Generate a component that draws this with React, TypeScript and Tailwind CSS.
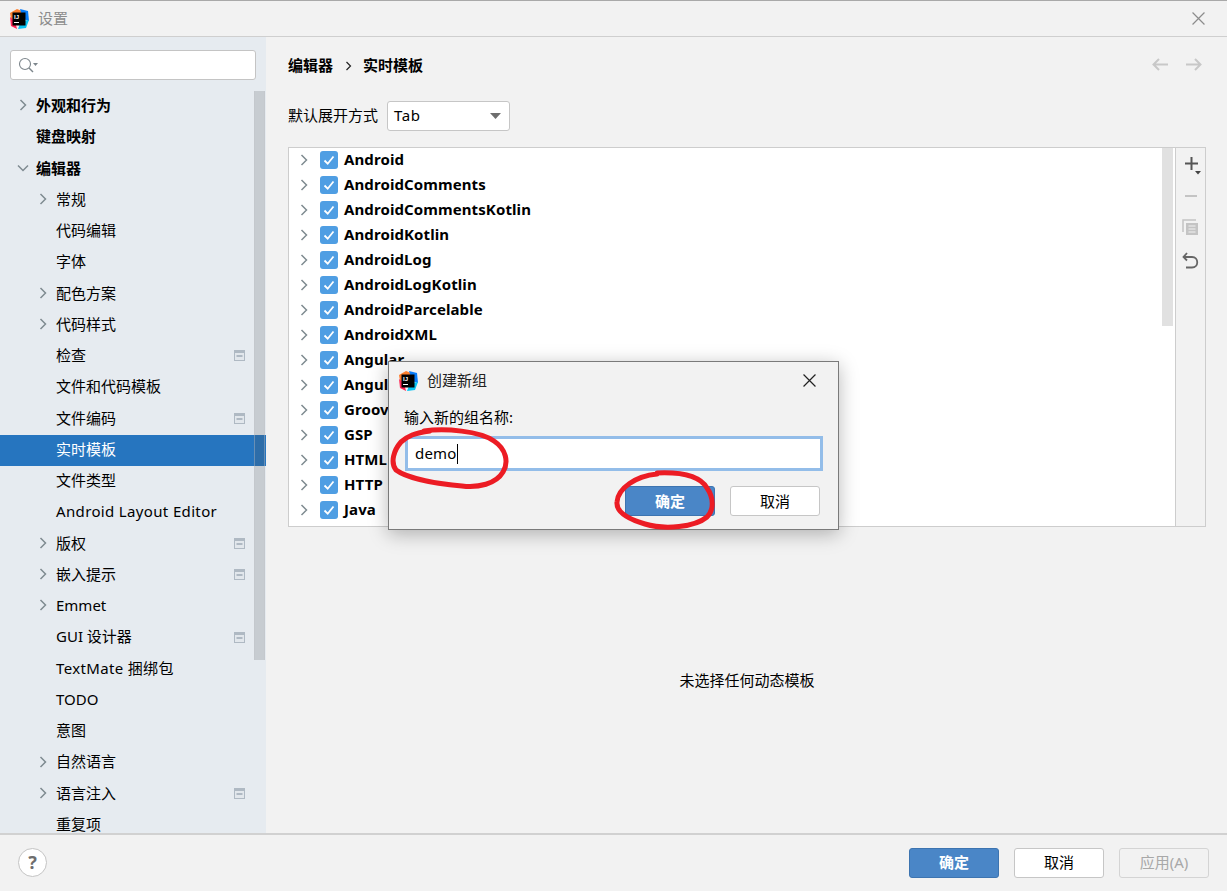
const font = "font-['Segoe_UI','Noto_Sans','Noto_Sans_CJK_SC',sans-serif]"

const sideItems = [
  { name: "外观和行为", bold: true, arrow: "right" },
  { name: "键盘映射", bold: true },
  { name: "编辑器", bold: true, arrow: "down" },
  { name: "常规", sub: true, arrow: "right" },
  { name: "代码编辑", sub: true },
  { name: "字体", sub: true },
  { name: "配色方案", sub: true, arrow: "right" },
  { name: "代码样式", sub: true, arrow: "right" },
  { name: "检查", sub: true, badge: true },
  { name: "文件和代码模板", sub: true },
  { name: "文件编码", sub: true, badge: true },
  { name: "实时模板", sub: true, selected: true },
  { name: "文件类型", sub: true },
  { name: "Android Layout Editor", sub: true, wide: true },
  { name: "版权", sub: true, arrow: "right", badge: true },
  { name: "嵌入提示", sub: true, arrow: "right", badge: true },
  { name: "Emmet", sub: true, arrow: "right" },
  { name: "GUI 设计器", sub: true, badge: true },
  { name: "TextMate 捆绑包", sub: true, wide: true },
  { name: "TODO", sub: true },
  { name: "意图", sub: true },
  { name: "自然语言", sub: true, arrow: "right" },
  { name: "语言注入", sub: true, arrow: "right", badge: true },
  { name: "重复项", sub: true },
]

const groups = [
  "Android",
  "AndroidComments",
  "AndroidCommentsKotlin",
  "AndroidKotlin",
  "AndroidLog",
  "AndroidLogKotlin",
  "AndroidParcelable",
  "AndroidXML",
  "Angular",
  "Angular",
  "Groovy",
  "GSP",
  "HTML",
  "HTTP",
  "Java",
]

const Chevron = ({ down = false }: { down?: boolean }) => (
  <svg width="12" height="12" viewBox="0 0 12 12" fill="none" stroke="#7f8b91" strokeWidth="1.5">
    {down ? <path d="M1 3.5 L6 8.5 L11 3.5" /> : <path d="M3.5 1 L8.5 6 L3.5 11" />}
  </svg>
)

const Logo = () => (
  <svg width="20" height="20" viewBox="0 0 20 20">
    <path d="M1 4 L8 0 L13 2 L8 10 L2 10 Z" fill="#fe7f2d" />
    <path d="M11 0 L19 2 L20 12 L14 10 Z" fill="#087cfa" />
    <path d="M1 8 L6 12 L8 20 L2 17 Z" fill="#fe2857" />
    <path d="M12 12 L20 11 L17 19 L9 20 Z" fill="#07c3f2" />
    <rect x="3.5" y="3.5" width="13" height="13" fill="#000" />
    <text x="5" y="10" fontSize="6" fontWeight="700" fill="#fff" fontFamily="Liberation Sans">IJ</text>
    <rect x="5" y="13" width="5" height="1" fill="#fff" />
  </svg>
)

const Close = ({ color, size = 12 }: { color: string; size?: number }) => (
  <svg width={size} height={size} viewBox="0 0 12 12" stroke={color} strokeWidth="1.1" fill="none">
    <path d="M0.5 0.5 L11.5 11.5 M11.5 0.5 L0.5 11.5" />
  </svg>
)

const Badge = () => (
  <svg width="11" height="11" viewBox="0 0 11 11">
    <rect width="11" height="11" fill="#afb9c3" />
    <rect x="1" y="3" width="9" height="7" fill="#e2e7ec" />
    <rect x="2.5" y="5" width="6" height="2" fill="#afb9c3" />
  </svg>
)

const Check = () => (
  <span className="w-[18px] h-[18px] rounded-[3px] bg-[#4f9ee3] flex items-center justify-center">
    <svg width="12" height="12" viewBox="0 0 12 12" fill="none" stroke="#fff" strokeWidth="1.8">
      <path d="M1.5 6.5 L4.7 9.7 L10.5 2.5" />
    </svg>
  </span>
)

const Sidebar = () => (
  <div className="relative w-[266px] shrink-0 bg-[#e6ebf0] overflow-hidden">
    <div className="px-[10px] pt-[13px] pb-[11.25px]">
      <div className="h-[30px] bg-white border border-[#c4c4c4] rounded-[3px] flex items-center pl-[7px]">
        <svg width="20" height="17" viewBox="0 0 20 17" fill="none" stroke="#7d868c" strokeWidth="1.1">
          <circle cx="7" cy="7" r="5.5" />
          <path d="M11 11 L15 15" strokeWidth="1.4" />
          <path d="M15 6 L20 6 L17.5 9 Z" fill="#7d868c" stroke="none" />
        </svg>
      </div>
    </div>
    {sideItems.map((item) => (
      <div
        key={item.name}
        className={`h-[31.25px] pb-[3px] flex items-center relative text-[15px] ${item.selected ? "bg-[#2675bf] text-white" : "text-black"} ${item.bold ? "font-bold" : ""} ${item.sub ? "pl-[56px]" : "pl-[36px]"}`}
      >
        {item.arrow && (
          <span className={`absolute top-[8px] ${item.sub ? "left-[37px]" : "left-[17px]"}`}>
            <Chevron down={item.arrow === "down"} />
          </span>
        )}
        <span className={`whitespace-nowrap ${item.wide ? "tracking-[0.35px]" : ""}`}>{item.name}</span>
        {item.badge && (
          <span className="absolute left-[234px] top-[9px]">
            <Badge />
          </span>
        )}
      </div>
    ))}
    <div className="absolute left-[254px] top-[54px] w-[11px] h-[569px] bg-[#4a4f55]/20 border-x border-[#c0c4c8]/40" />
  </div>
)

const TemplateList = () => (
  <div className="relative h-[380px] flex border border-[#cdcdcd] bg-white">
    <div className="flex-1 overflow-hidden">
      <div className="-mt-[1px]">
        {groups.map((g, i) => (
          <div key={i} className="h-[25px] flex items-center pl-[9px] text-[15px] font-bold text-black tracking-[0.1px]">
            <Chevron />
            <span className="ml-[10px] mr-[6px]">
              <Check />
            </span>
            <span>{g}</span>
          </div>
        ))}
      </div>
    </div>
    <div className="w-[13px]">
      <div className="w-[11px] h-[178px] bg-[#e1e1e1]" />
    </div>
    <div className="w-[30px] bg-[#f2f2f2] border-l border-[#cdcdcd] flex flex-col items-center pt-[7px]">
      <svg className="ml-[4px]" width="18" height="21" viewBox="0 0 18 21" fill="none">
        <path d="M7.5 2 V15 M1 8.5 H14" stroke="#555" strokeWidth="2" />
        <path d="M11 16 H17 L14 19.5 Z" fill="#444" />
      </svg>
      <svg className="mt-[13px]" width="14" height="14" viewBox="0 0 14 14">
        <rect x="1" y="6" width="12" height="2" fill="#c4c4c4" />
      </svg>
      <svg className="mt-[16px]" width="17" height="17" viewBox="0 0 17 17" fill="none">
        <path d="M1 13 V1 H14" stroke="#c4c4c4" strokeWidth="1.5" />
        <rect x="4" y="4" width="12" height="12" fill="#c4c4c4" />
        <path d="M6.5 7 H13.5 M6.5 10 H13.5 M6.5 13 H13.5" stroke="#f2f2f2" />
      </svg>
      <svg className="mt-[16px]" width="17" height="17" viewBox="0 0 17 17" fill="none" stroke="#666" strokeWidth="1.8">
        <path d="M5 1 L1.5 5 L5 8.5" />
        <path d="M2 5 H10 C17 5 17 15.5 10 15.5 H4" />
      </svg>
    </div>
  </div>
)

const Main = () => (
  <div className="flex-1 min-w-0 flex flex-col pl-[22px] pr-[21px] text-[15px] text-black">
    <div className="h-[56px] flex items-center font-semibold pt-[1px] relative">
      <span>编辑器</span>
      <span className="ml-[12px] mr-[10px]">
        <svg width="8" height="10" viewBox="0 0 8 10" fill="none" stroke="#222" strokeWidth="1.2">
          <path d="M1.5 1 L5.5 5 L1.5 9" />
        </svg>
      </span>
      <span>实时模板</span>
      <div className="absolute right-[4px] top-[21px] flex gap-[18px]">
        {["M7 1 L1.5 6.5 L7 12 M2 6.5 H16", "M9 1 L14.5 6.5 L9 12 M14 6.5 H0"].map((d) => (
          <svg key={d} width="16" height="13" viewBox="0 0 16 13" fill="none" stroke="#c8c8c8" strokeWidth="2">
            <path d={d} />
          </svg>
        ))}
      </div>
    </div>
    <div className="flex items-center h-[30px] mt-[8px]">
      <span className="mr-[9px] -mt-[1px]">默认展开方式</span>
      <div className="w-[123px] h-[30px] bg-white border border-[#c6c6c6] rounded-[3px] flex items-center justify-between pl-[6px] pr-[8px]">
        <span className="tracking-[0.6px] -mt-[2px]">Tab</span>
        <svg width="11" height="6" viewBox="0 0 11 6">
          <path d="M0 0 H11 L5.5 6 Z" fill="#6e6e6e" />
        </svg>
      </div>
    </div>
    <div className="mt-[16px]">
      <TemplateList />
    </div>
    <div className="flex-1 flex items-center justify-center">
      <span>未选择任何动态模板</span>
    </div>
  </div>
)

const Footer = () => (
  <div className="h-[58px] pb-[1px] border-t-2 border-[#d1d1d1] flex items-center pl-[18px] pr-[18px] text-[15px]">
    <span className="w-[29px] h-[29px] rounded-full bg-white border border-[#c4c4c4] flex items-center justify-center font-bold text-[18px] text-[#6e6e6e]">
      ?
    </span>
    <div className="ml-auto flex gap-[15px]">
      <button className="w-[90px] h-[30px] rounded-[3px] bg-[#4a86c7] border border-[#3d74b0] text-white font-semibold">确定</button>
      <button className="w-[90px] h-[30px] rounded-[3px] bg-white border border-[#c6c6c6] text-black">取消</button>
      <button className="w-[90px] h-[30px] rounded-[3px] bg-[#f2f2f2] border border-[#d4d4d4] text-[#a8a8a8]">应用(A)</button>
    </div>
  </div>
)

const Dialog = () => (
  <div className="absolute left-[388px] top-[361px] w-[451px] h-[169px] bg-[#f2f2f2] border border-[#7a7a7a] shadow-[0_4px_18px_rgba(0,0,0,0.28)] text-[15px] text-black">
    <div className="h-[37px] flex items-center pl-[9px] pr-[22px]">
      <Logo />
      <span className="ml-[9px] text-[#222]">创建新组</span>
      <span className="ml-auto">
        <Close color="#222" size={13} />
      </span>
    </div>
    <div className="px-[15px] pt-[8px] leading-[20px]">输入新的组名称:</div>
    <div className="ml-[16px] mr-[15px] mt-[9px] h-[35px] bg-white border-[3px] border-[#93bde9] flex items-center pl-[7px]">
      <span className="tracking-[0.2px]">demo</span>
      <span className="w-px h-[20px] bg-black" />
    </div>
    <div className="flex justify-end gap-[15px] pr-[18px] mt-[15px]">
      <button className="w-[90px] h-[30px] rounded-[3px] bg-[#4a86c7] border border-[#3d74b0] text-white font-semibold">确定</button>
      <button className="w-[90px] h-[30px] rounded-[3px] bg-white border border-[#c6c6c6]">取消</button>
    </div>
  </div>
)

// hand-drawn red circles over the dialog
const Annotations = () => (
  <svg className="absolute left-0 top-0 pointer-events-none" width="1227" height="891" fill="none" stroke="#ec1c24" strokeWidth="5" strokeLinecap="round">
    <path d="M424 431 C445 428 480 431 494 441 C506 449 509 462 503 472 C496 484 478 488 462 486 C440 484 408 479 396 470 C390 462 394 450 401 442 C408 436 414 433 430 431" />
    <path d="M657 473 C680 472 700 476 707 488 C714 498 714 510 707 517 C695 527 665 530 645 524 C628 519 616 512 617 502 C618 488 636 476 657 474" />
  </svg>
)

export default function App() {
  return (
    <div className={`relative w-[1227px] h-[891px] overflow-hidden bg-[#f2f2f2] flex flex-col ${font}`}>
      <div className="h-[37px] shrink-0 border-t border-t-[#a9a9a9] border-b border-b-[#cfcfcf] flex items-center pl-[9px] pr-[22px]">
        <Logo />
        <span className="ml-[9px] text-[15px] text-[#8c8c8c]">设置</span>
        <span className="ml-auto">
          <Close color="#8c8c8c" size={13} />
        </span>
      </div>
      <div className="flex-1 min-h-0 flex">
        <Sidebar />
        <Main />
      </div>
      <Footer />
      <Dialog />
      <Annotations />
    </div>
  )
}
